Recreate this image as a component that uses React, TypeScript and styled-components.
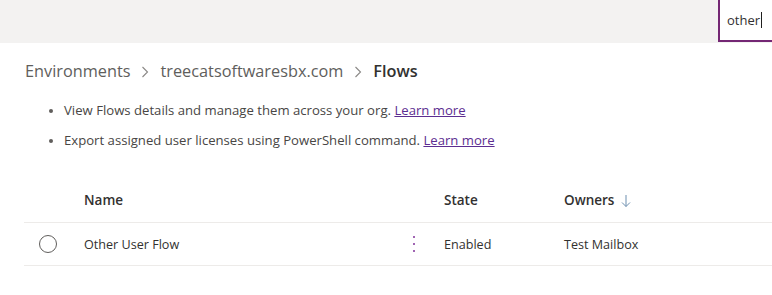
import styled, { createGlobalStyle } from "styled-components";

const Global = createGlobalStyle`
  body {
    margin: 0;
    background: #ffffff;
    font-family: "Open Sans", "Noto Sans", sans-serif;
    color: #323130;
  }
`;

const Page = styled.div`
  width: 772px;
  height: 295px;
  overflow: hidden;
`;

const TopBar = styled.div`
  height: 43px;
  background: #f3f2f1;
  display: flex;
  justify-content: flex-end;
`;

const SearchBox = styled.div`
  width: 54px;
  height: 43px;
  background: #ffffff;
  border-left: 2px solid #742774;
  border-bottom: 2px solid #742774;
  display: flex;
  align-items: center;
  padding-left: 7px;
  font-size: 13px;
  color: #323130;
  box-sizing: border-box;
  margin-top: -1px;
  padding-top: 1px;
`;

const Caret = styled.span`
  display: inline-block;
  width: 1px;
  height: 16px;
  background: #201f1e;
  margin-left: 1px;
  vertical-align: middle;
`;

const Breadcrumb = styled.div`
  display: flex;
  align-items: center;
  padding: 15px 0 0 25px;
  height: 26px;
  font-size: 16.3px;
  color: #605e5c;
`;

const Crumb = styled.span<{ $current?: boolean }>`
  font-weight: ${(p) => (p.$current ? 600 : 400)};
  color: ${(p) => (p.$current ? "#323130" : "#605e5c")};
`;

const Chevron = styled.svg`
  width: 8px;
  height: 12px;
  margin: 2px 11px 0 11px;
`;

const Bullets = styled.ul`
  margin: 18px 0 0 0;
  padding: 0 0 0 64px;
  font-size: 13.15px;
  color: #484644;
`;

const Bullet = styled.li`
  height: 30px;
  line-height: 17px;
  &::marker {
    color: #605e5c;
    font-size: 12px;
  }
`;

const Link = styled.a`
  color: #5c2d91;
  text-decoration: underline;
`;

const Table = styled.div`
  margin: 16px 0 0 24px;
`;

const Row = styled.div<{ $head?: boolean }>`
  display: grid;
  grid-template-columns: 60px 320px 40px 120px 1fr;
  align-items: center;
  height: ${(p) => (p.$head ? "44px" : "42px")};
  border-bottom: 1px solid #edebe9;
  font-size: ${(p) => (p.$head ? "13.5px" : "12.6px")};
  font-weight: ${(p) => (p.$head ? 600 : 400)};
  color: #323130;
`;

const Check = styled.span`
  width: 18px;
  height: 18px;
  border: 1px solid #605e5c;
  border-radius: 50%;
  margin-left: 15px;
  box-sizing: border-box;
`;

const Kebab = styled.span`
  display: flex;
  flex-direction: column;
  gap: 5px;
  padding-left: 9px;
  & > i {
    width: 2px;
    height: 2px;
    background: #a065b3;
  }
`;

const Owners = styled.span`
  display: flex;
  align-items: center;
`;

const Arrow = styled.svg`
  width: 10px;
  height: 14px;
  margin-left: 7px;
  margin-top: 2px;
`;

const Cell = styled.span``;

const Sep = () => (
  <Chevron viewBox="0 0 8 12">
    <path d="M1.5 1 L6.5 6 L1.5 11" fill="none" stroke="#8a8886" strokeWidth="1.1" />
  </Chevron>
);

export default function App() {
  return (
    <Page>
      <Global />
      <TopBar>
        <SearchBox>
          other
          <Caret />
        </SearchBox>
      </TopBar>
      <Breadcrumb>
        <Crumb>Environments</Crumb>
        <Sep />
        <Crumb>treecatsoftwaresbx.com</Crumb>
        <Sep />
        <Crumb $current>Flows</Crumb>
      </Breadcrumb>
      <Bullets>
        <Bullet>
          View Flows details and manage them across your org. <Link href="#">Learn more</Link>
        </Bullet>
        <Bullet>
          Export assigned user licenses using PowerShell command. <Link href="#">Learn more</Link>
        </Bullet>
      </Bullets>
      <Table>
        <Row $head>
          <Cell />
          <Cell>Name</Cell>
          <Cell />
          <Cell>State</Cell>
          <Owners>
            Owners
            <Arrow viewBox="0 0 10 14">
              <path d="M5 1 V12.5 M1 8.5 L5 12.5 L9 8.5" fill="none" stroke="#6d8fb0" strokeWidth="1" />
            </Arrow>
          </Owners>
        </Row>
        <Row>
          <Check />
          <Cell>Other User Flow</Cell>
          <Kebab>
            <i />
            <i />
            <i />
          </Kebab>
          <Cell>Enabled</Cell>
          <Cell>Test Mailbox</Cell>
        </Row>
      </Table>
    </Page>
  );
}
